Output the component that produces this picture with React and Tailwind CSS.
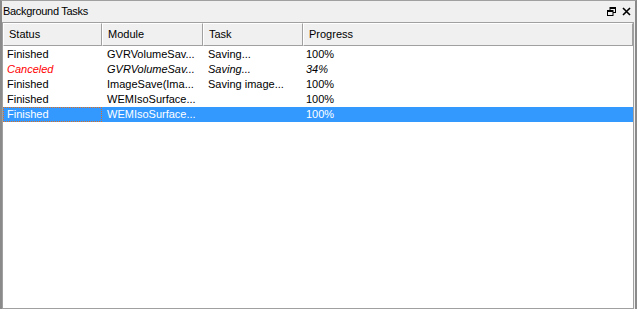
import React from 'react';

const rows = [
    { status: 'Finished', module: 'GVRVolumeSav...', task: 'Saving...', progress: '100%' },
    { status: 'Canceled', module: 'GVRVolumeSav...', task: 'Saving...', progress: '34%', canceled: true },
    { status: 'Finished', module: 'ImageSave(Ima...', task: 'Saving image...', progress: '100%' },
    { status: 'Finished', module: 'WEMIsoSurface...', task: '', progress: '100%' },
    { status: 'Finished', module: 'WEMIsoSurface...', task: '', progress: '100%', selected: true },
];

const HeaderCell = ({ children, className = '' }) => (
    <div className={`h-[23px] flex items-center pl-[5px] bg-[#f0f0f0] border-t border-l border-t-white border-l-white border-r border-b border-r-[#a0a0a0] border-b-[#a0a0a0] ${className}`}>
        {children}
    </div>
);

const App = () => {
    return (
        <div
            className="w-[637px] h-[309px] bg-[#f0f0f0] text-[11px] text-black overflow-hidden flex flex-col border-t border-t-[#a0a0a0] border-l-2 border-l-[#8a8a8a] border-r-2 border-r-[#8a8a8a]"
            style={{ fontFamily: '"Liberation Sans", Arial, sans-serif' }}
        >
            <div className="h-[21px] flex items-center justify-between pl-[1px] pr-[4px]">
                <span className="text-[11px] tracking-[-0.3px]">Background Tasks</span>
                <div className="flex items-center gap-[6px]">
                    <svg width="9" height="9" viewBox="0 0 9 9">
                        <rect x="3" y="0.5" width="5.5" height="5" fill="none" stroke="#000" />
                        <rect x="3" y="0" width="6" height="2" fill="#000" />
                        <rect x="0.5" y="3.5" width="5.5" height="5" fill="#f0f0f0" stroke="#000" />
                        <rect x="0" y="3" width="6" height="2" fill="#000" />
                    </svg>
                    <svg width="9" height="9" viewBox="0 0 9 9">
                        <path d="M1 1 L8 8 M8 1 L1 8" stroke="#000" strokeWidth="1.6" />
                    </svg>
                </div>
            </div>
            <div className="flex-1 bg-white border border-[#a0a0a0] mr-[1px] flex flex-col">
                <div className="flex">
                    <HeaderCell className="w-[99px]">Status</HeaderCell>
                    <HeaderCell className="w-[101px]">Module</HeaderCell>
                    <HeaderCell className="w-[100px]">Task</HeaderCell>
                    <HeaderCell className="flex-1">Progress</HeaderCell>
                </div>
                <div className="pt-[1px] flex flex-col">
                    {rows.map((r, i) => (
                        <div
                            key={i}
                            className={`flex h-[15px] items-center ${r.selected ? 'bg-[#3399ff] text-white' : ''} ${r.canceled ? 'italic' : ''}`}
                        >
                            <div className={`w-[99px] h-full flex items-center pl-[3px] ${r.selected ? 'border border-dotted border-[#e07020]' : 'border border-transparent'} ${r.canceled ? 'text-[#ff0000]' : ''}`}>
                                {r.status}
                            </div>
                            <div className="w-[101px] pl-[5px]">{r.module}</div>
                            <div className="w-[100px] pl-[5px]">{r.task}</div>
                            <div className="flex-1 pl-[3px]">{r.progress}</div>
                        </div>
                    ))}
                </div>
            </div>
        </div>
    );
};

export default App;
